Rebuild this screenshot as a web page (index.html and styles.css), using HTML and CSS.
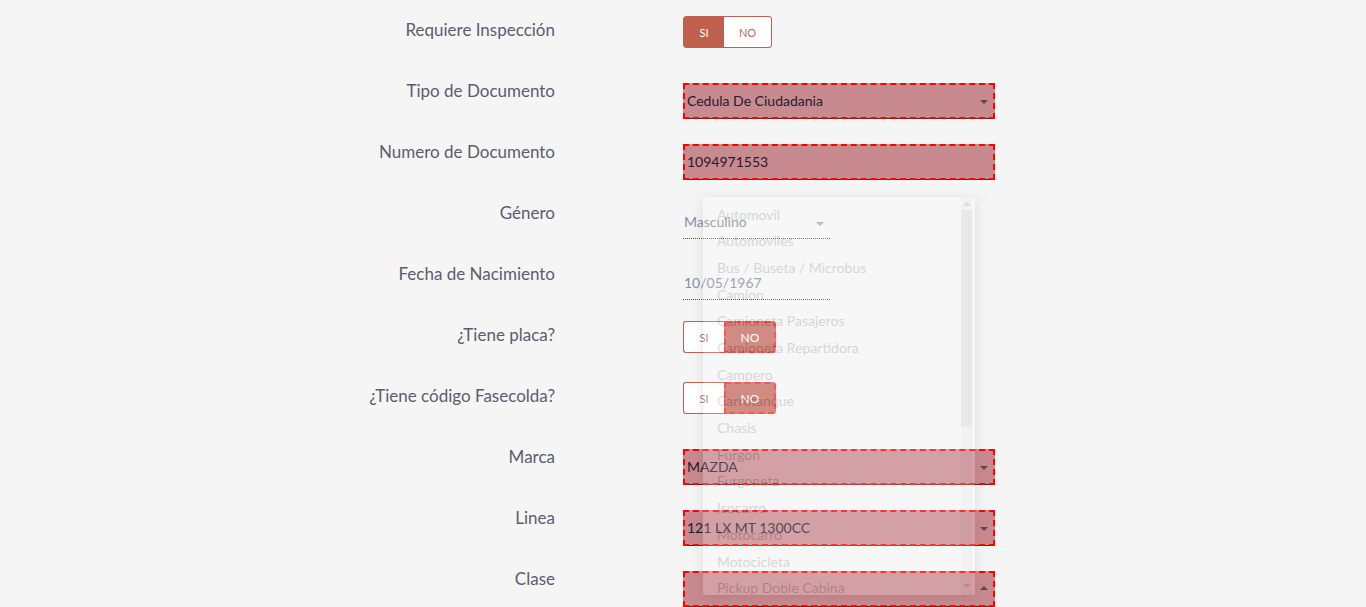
FILE: index.html
```html
<!DOCTYPE html>
<html lang="es">
<head>
<meta charset="utf-8">
<title>Formulario</title>
<link rel="stylesheet" href="styles.css">
</head>
<body>
<div class="form">
  <div class="row">
    <div class="lbl">Requiere Inspección</div>
    <div class="ctl">
      <div class="toggle"><span class="seg si on">SI</span><span class="seg no">NO</span></div>
    </div>
  </div>
  <div class="row">
    <div class="lbl">Tipo de Documento</div>
    <div class="ctl"><div class="field hl caret">Cedula De Ciudadania</div></div>
  </div>
  <div class="row">
    <div class="lbl">Numero de Documento</div>
    <div class="ctl"><div class="field hl">1094971553</div></div>
  </div>
  <div class="row">
    <div class="lbl">Género</div>
    <div class="ctl"><div class="field plain caret-light">Masculino</div></div>
  </div>
  <div class="row">
    <div class="lbl">Fecha de Nacimiento</div>
    <div class="ctl"><div class="field plain">10/05/1967</div></div>
  </div>
  <div class="row">
    <div class="lbl">¿Tiene placa?</div>
    <div class="ctl">
      <div class="toggle open"><span class="seg si white">SI</span><span class="seg no hlseg">NO</span></div>
    </div>
  </div>
  <div class="row">
    <div class="lbl">¿Tiene código Fasecolda?</div>
    <div class="ctl">
      <div class="toggle open"><span class="seg si white">SI</span><span class="seg no hlseg">NO</span></div>
    </div>
  </div>
  <div class="row">
    <div class="lbl">Marca</div>
    <div class="ctl"><div class="field hl caret">MAZDA</div></div>
  </div>
  <div class="row">
    <div class="lbl">Linea</div>
    <div class="ctl"><div class="field hl caret">121 LX MT 1300CC</div></div>
  </div>
  <div class="row">
    <div class="lbl">Clase</div>
    <div class="ctl"><div class="field hl caret-up"></div></div>
  </div>
</div>

<div class="dropdown">
  <ul class="options">
    <li>Automovil</li>
    <li>Automoviles</li>
    <li>Bus / Buseta / Microbus</li>
    <li>Camion</li>
    <li>Camioneta Pasajeros</li>
    <li>Camioneta Repartidora</li>
    <li>Campero</li>
    <li>Carrotanque</li>
    <li>Chasis</li>
    <li>Furgon</li>
    <li>Furgoneta</li>
    <li>Isocarro</li>
    <li>Motocarro</li>
    <li>Motocicleta</li>
    <li>Pickup Doble Cabina</li>
  </ul>
  <div class="scroll">
    <span class="arr up"></span>
    <span class="thumb"></span>
    <span class="track"></span>
    <span class="arr down"></span>
  </div>
</div>
</body>
</html>
```

FILE: styles.css
```css
html, body {
  margin: 0;
  padding: 0;
  background: #f5f5f5;
  font-family: Lato, "Liberation Sans", sans-serif;
  overflow: hidden;
}

.form {
  padding: 18px 0 0 8px;
}

.row {
  display: grid;
  grid-template-columns: 547px 312px;
  column-gap: 128px;
  height: 61px;
  align-items: start;
}

.lbl {
  text-align: right;
  font-size: 17px;
  line-height: 24px;
  color: #5c5c70;
}

.ctl {
  position: relative;
}

/* toggles */
.toggle {
  display: flex;
  margin-top: -2px;
  height: 32px;
  width: 89px;
  box-sizing: border-box;
  border: 1px solid #c0604f;
  border-radius: 3px;
  background: #fff;
  font-size: 11px;
}
.seg {
  display: flex;
  align-items: center;
  justify-content: center;
  box-sizing: border-box;
}
.seg.si { width: 40px; }
.seg.no { width: 47px; color: #b86a5e; }
.seg.on {
  background: #c0604f;
  color: #fff;
}
.toggle.open {
  border: none;
  background: transparent;
  width: 93px;
}
.seg.white {
  width: 41px;
  background: #fff;
  border: 1px solid #c0604f;
  border-right: none;
  border-radius: 3px 0 0 3px;
  color: #b86a5e;
}
.seg.hlseg {
  width: 52px;
  background: #c56f64;
  color: #fff;
  font-size: 12px;
  border: 2px dashed #ff2a2a;
  border-radius: 0 3px 3px 0;
}

/* fields */
.field {
  margin-top: 4px;
  box-sizing: border-box;
  display: flex;
  align-items: center;
  font-size: 14px;
  position: relative;
}
.field.hl {
  width: 312px;
  height: 36px;
  padding-left: 4px;
  color: #241a2e;
  background: rgba(157, 31, 41, 0.5);
  border-bottom: 1px solid #3a2a30;
  outline: 2px dashed #ff0000;
  outline-offset: -2px;
}
.field.plain {
  width: 147px;
  height: 34px;
  padding-left: 1px;
  color: #8c8ca2;
  border-bottom: 1px dotted #555;
}
.caret::after,
.caret-light::after,
.caret-up::after {
  content: "";
  position: absolute;
  top: 50%;
  width: 0;
  height: 0;
  border-left: 4.5px solid transparent;
  border-right: 4.5px solid transparent;
}
.caret::after {
  right: 7px;
  margin-top: -1px;
  border-top: 4.5px solid #5a4a50;
}
.caret-up::after {
  right: 7px;
  margin-top: -3px;
  border-bottom: 4.5px solid #5a4a50;
}
.caret-light::after {
  right: 6px;
  margin-top: 0;
  border-top: 4.5px solid #a8a8b0;
}

/* dropdown overlay */
.dropdown {
  position: absolute;
  left: 703px;
  top: 197px;
  width: 272px;
  height: 398px;
  background: #fff;
  box-shadow: 0 2px 12px rgba(0, 0, 0, 0.5);
  opacity: 0.2;
  display: flex;
  overflow: hidden;
  border-radius: 2px;
}
.options {
  list-style: none;
  margin: 0;
  padding: 4.6px 0 0 14px;
  flex: 1;
  font-size: 14px;
  color: #5a5a5a;
}
.options li {
  height: 26.7px;
  line-height: 26.7px;
  white-space: nowrap;
}
.scroll {
  width: 11px;
  margin-right: 3px;
  display: flex;
  flex-direction: column;
  align-items: center;
  padding-top: 5px;
  background: #e8e8e8;
}
.arr {
  width: 0;
  height: 0;
  border-left: 4px solid transparent;
  border-right: 4px solid transparent;
}
.arr.up {
  border-bottom: 4px solid #888;
  margin-bottom: 4px;
}
.arr.down {
  border-top: 4px solid #888;
  margin: 0 0 7px;
}
.thumb {
  width: 11px;
  height: 217px;
  background: #b8b8b8;
}
.track {
  flex: 1;
}
```
